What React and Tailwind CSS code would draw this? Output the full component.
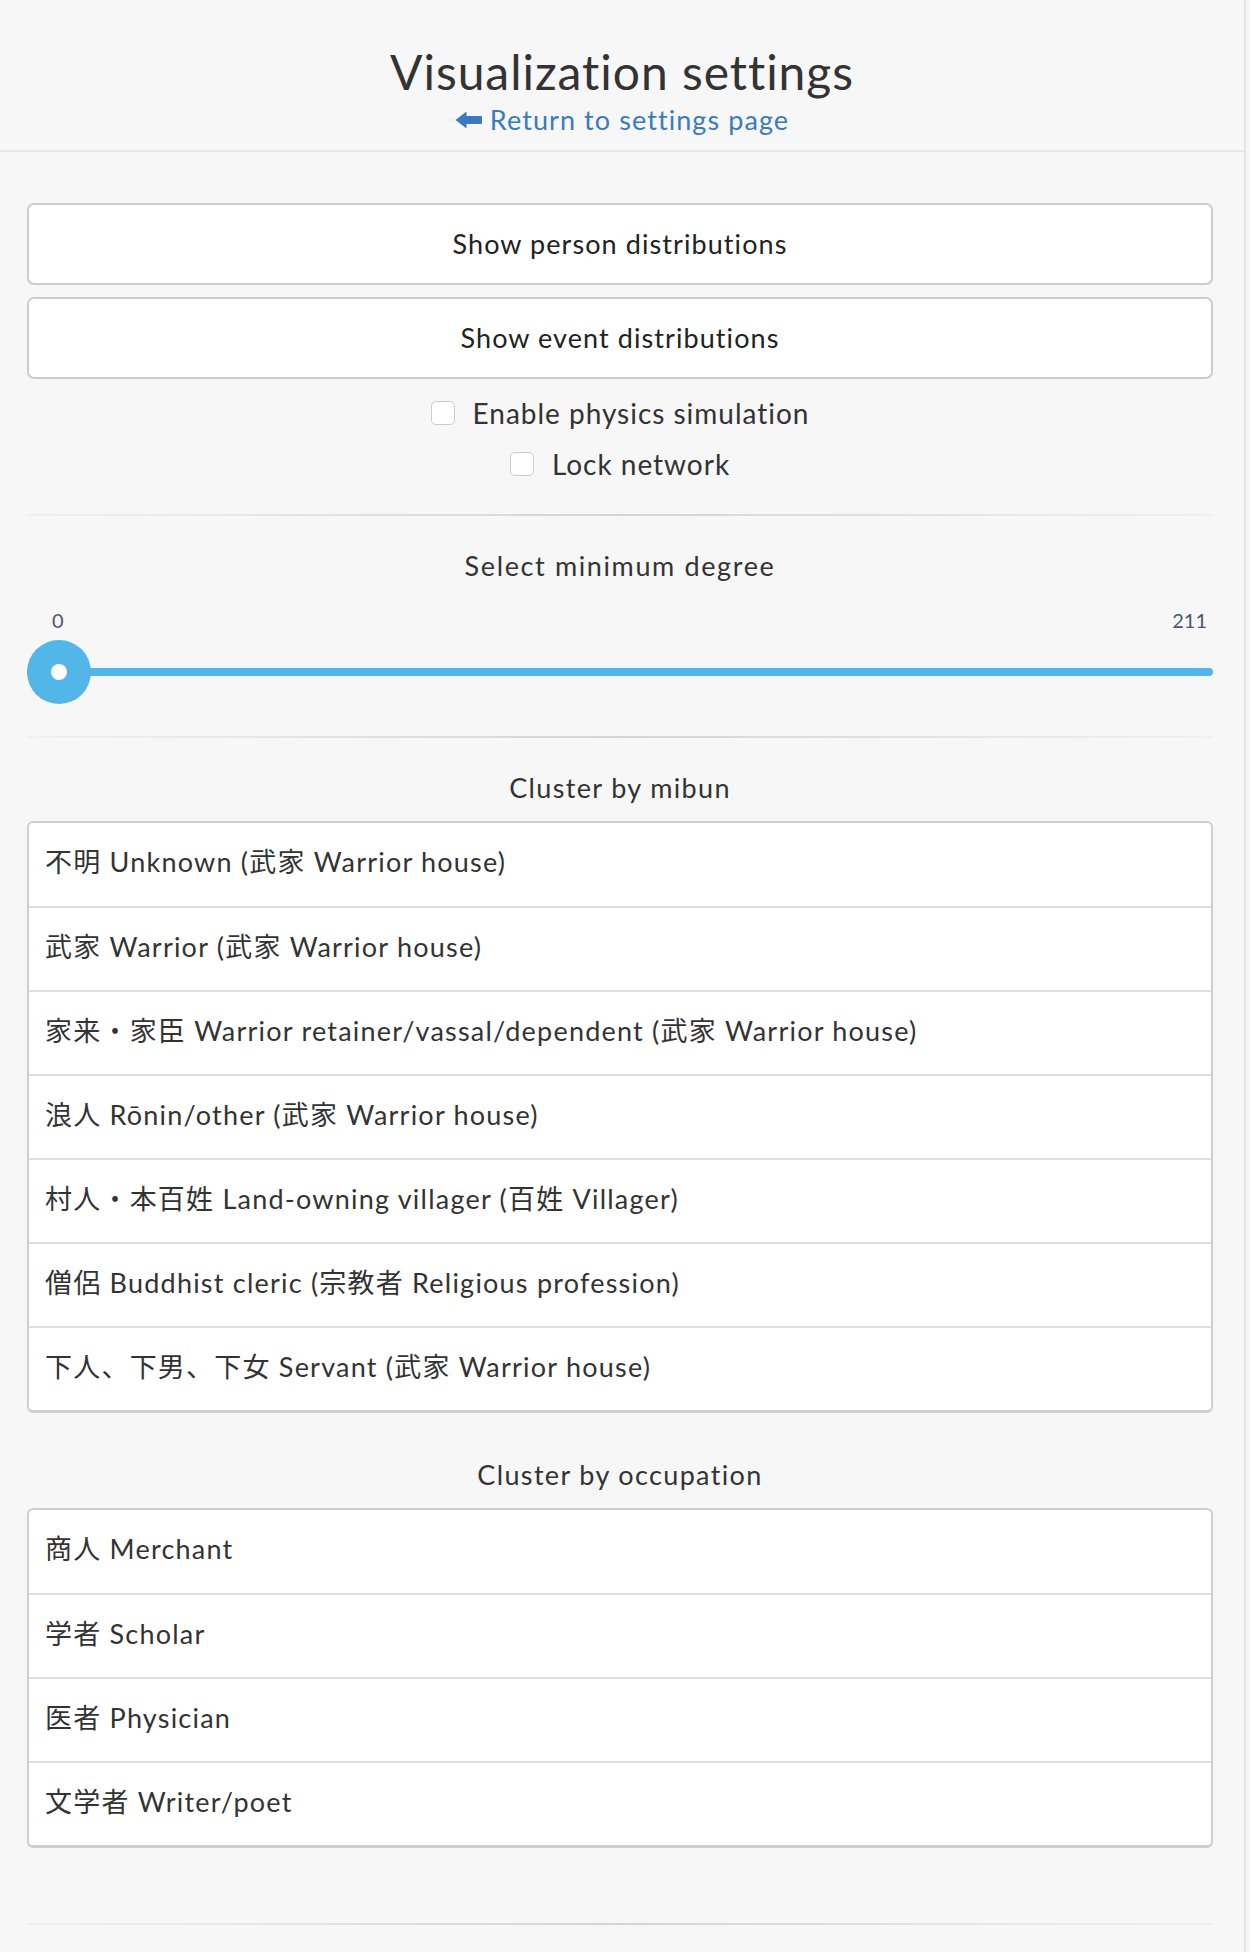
import React from "react";

const mibun = [
  "不明 Unknown (武家 Warrior house)",
  "武家 Warrior (武家 Warrior house)",
  "家来・家臣 Warrior retainer/vassal/dependent (武家 Warrior house)",
  "浪人 Rōnin/other (武家 Warrior house)",
  "村人・本百姓 Land-owning villager (百姓 Villager)",
  "僧侶 Buddhist cleric (宗教者 Religious profession)",
  "下人、下男、下女 Servant (武家 Warrior house)",
];

const occupations = ["商人 Merchant", "学者 Scholar", "医者 Physician", "文学者 Writer/poet"];

const ArrowLeft = () => (
  <svg width="27" height="18" viewBox="0 0 27 18" className="shrink-0">
    <path d="M0.5 9 L11.5 0.5 L11.5 5 L26 5 Q27 5 27 6 L27 12 Q27 13 26 13 L11.5 13 L11.5 17.5 Z" fill="#3a7bbf" />
  </svg>
);

const Divider = ({ className = "" }) => (
  <div className={`h-[2px] bg-gradient-to-r from-[#f1f1f1] via-[#d4d4d4] to-[#f1f1f1] ${className}`} />
);

const ListGroup = ({ items }) => (
  <div className="bg-white border-2 border-b-[3px] border-[#cfcfcf] rounded-[6px] overflow-hidden">
    {items.map((item, i) => (
      <div
        key={item}
        className={`flex items-center pl-[16px] pb-[4px] text-[27px] tracking-[0.045em] text-[#333] ${
          i > 0 ? "h-[84px] border-t-2 border-[#dedede]" : "h-[83px]"
        }`}
      >
        {item}
      </div>
    ))}
  </div>
);

const Check = ({ label }) => (
  <div className="h-[51px] flex items-center justify-center gap-[18px]">
    <span className="w-[24px] h-[24px] rounded-[5px] border border-[#cccccc] bg-white" />
    <span className="text-[28px] tracking-[0.035em] text-[#333]">{label}</span>
  </div>
);

const Heading = ({ children, className = "" }) => (
  <div className={`h-[40px] flex items-center justify-center text-[27px] text-[#333] ${className}`}>
    {children}
  </div>
);

export default function App() {
  const btn =
    "w-full h-[82px] bg-white border-2 border-[#cccccc] rounded-[7px] text-[27px] tracking-[0.04em] text-[#222] flex items-center justify-center";

  return (
    <div className="min-h-[1952px] bg-[#f7f7f7] flex font-['Lato','Noto_Sans_CJK_JP',sans-serif]">
      <div className="w-[1244px]">
        {/* header */}
        <div className="h-[152px] border-b-2 border-[#e6e6e6] flex flex-col items-center">
          <h1 className="mt-[44px] text-[48px] leading-[56px] tracking-[0.02em] text-[#333]">Visualization settings</h1>
          <a href="#" className="mt-[5px] flex items-center gap-[8px] text-[27px] leading-[30px] tracking-[0.04em] text-[#3a7bbf]">
            <ArrowLeft />
            Return to settings page
          </a>
        </div>

        <div className="px-[27px] mr-[4px]">
          <div className="mt-[51px] flex flex-col gap-[12px]">
            <button className={btn}>Show person distributions</button>
            <button className={btn}>Show event distributions</button>
          </div>

          <div className="mt-[8px]">
            <Check label="Enable physics simulation" />
            <Check label="Lock network" />
          </div>

          <Divider className="mt-[25px]" />

          <Heading className="mt-[30px] tracking-[0.06em]">Select minimum degree</Heading>

          {/* slider */}
          <div className="mt-[22px] h-[24px] flex items-center justify-between pl-[25px] pr-[6px] text-[20px] text-[#4b5873]">
            <span>0</span>
            <span>211</span>
          </div>
          <div className="mt-[8px] h-[64px] relative flex items-center">
            <div className="w-full h-[8px] rounded-full bg-[#52b6e8]" />
            <div className="absolute left-0 top-0 w-[64px] h-[64px] rounded-full bg-[#52b6e8] flex items-center justify-center">
              <div className="w-[16px] h-[16px] rounded-full bg-white" />
            </div>
          </div>

          <Divider className="mt-[32px]" />

          <Heading className="mt-[30px] tracking-[0.05em]">Cluster by mibun</Heading>
          <div className="mt-[13px]">
            <ListGroup items={mibun} />
          </div>

          <Heading className="mt-[42px] tracking-[0.05em]">Cluster by occupation</Heading>
          <div className="mt-[13px]">
            <ListGroup items={occupations} />
          </div>

          <Divider className="mt-[75px]" />
        </div>
      </div>
      <div className="w-[2px] bg-[#e4e4e4]" />
      <div className="flex-1" />
    </div>
  );
}
